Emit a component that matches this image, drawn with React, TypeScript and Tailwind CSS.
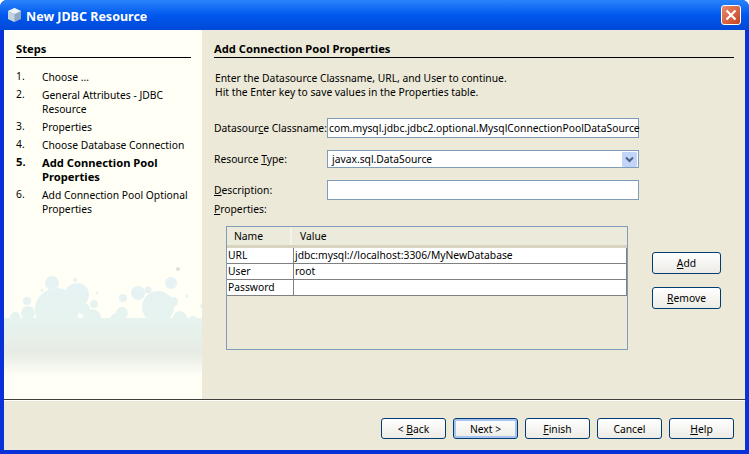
import type { ReactNode } from "react";

const FONT = "font-['Noto_Sans','DejaVu_Sans',sans-serif] text-[10.3px] leading-[14px]";
const BOLD = "text-[11.2px] font-bold";

const STEPS: { n: string; label: string; active?: boolean }[] = [
  { n: "1.", label: "Choose ..." },
  { n: "2.", label: "General Attributes - JDBC Resource" },
  { n: "3.", label: "Properties" },
  { n: "4.", label: "Choose Database Connection" },
  { n: "5.", label: "Add Connection Pool Properties", active: true },
  { n: "6.", label: "Add Connection Pool Optional Properties" },
];

const BUBBLES = [
  [52, 283, 7], [75, 280, 2], [42, 290, 1.5], [57, 310, 22], [77, 295, 12], [97, 293, 1.5],
  [94, 304, 4], [27, 301, 4], [123, 298, 4], [138, 293, 7], [148, 290, 3.5], [171, 283, 6],
  [158, 307, 16], [173, 302, 5], [187, 296, 1.5], [122, 313, 6], [92, 318, 9], [84, 309, 6],
  [28, 313, 7], [15, 317, 5], [117, 320, 7], [180, 318, 7], [193, 320, 4], [202, 306, 2],
];

function Bubbles() {
  return (
    <svg className="absolute left-0 top-[230px] h-[139px] w-[198px]" viewBox="0 260 198 139">
      <defs>
        <linearGradient id="fade" gradientUnits="userSpaceOnUse" x1="0" y1="275" x2="0" y2="376">
          <stop offset="0" stopColor="#e6f2f5" />
          <stop offset="0.45" stopColor="#e6f3ee" />
          <stop offset="0.78" stopColor="#e7ece5" />
          <stop offset="1" stopColor="#fffff6" />
        </linearGradient>
      </defs>
      <g fill="url(#fade)">
        {BUBBLES.map(([x, y, r]) => (
          <circle key={`${x}-${y}`} cx={x - 4} cy={y} r={r} />
        ))}
        <rect x="0" y="318" width="198" height="60" />
      </g>
      <circle cx="174" cy="269" r="2" fill="#e2e0dc" />
    </svg>
  );
}

function WinButton({ children, primary }: { children: ReactNode; primary?: boolean }) {
  return (
    <button
      className={`h-[21px] w-[65px] rounded-[3px] border border-[#003c74] bg-gradient-to-b from-white to-[#ecebe5] text-center text-black ${FONT} ${
        primary ? "shadow-[inset_0_0_0_2px_#a9c4f0]" : ""
      }`}
    >
      {children}
    </button>
  );
}

function SideButton({ children }: { children: ReactNode }) {
  return (
    <button className={`h-[22px] w-[69px] rounded-[3px] border border-[#003c74] bg-gradient-to-b from-white to-[#ecebe5] ${FONT}`}>
      {children}
    </button>
  );
}

function Field({ children, combo }: { children?: ReactNode; combo?: boolean }) {
  return (
    <div className={`flex w-[312px] items-center justify-between border border-[#7f9db9] bg-white pl-[1px] ${combo ? "h-[18px] pr-[1px]" : "h-[20px]"}`}>
      <span className="whitespace-nowrap">{children}</span>
      {combo && (
        <span className="flex h-[15px] w-[15px] items-center justify-center rounded-[1px] bg-[#c3d4fb]">
          <svg width="9" height="7" viewBox="0 0 9 7">
            <path d="M1 1.5 L4.5 5 L8 1.5" fill="none" stroke="#4d6185" strokeWidth="2" />
          </svg>
        </span>
      )}
    </div>
  );
}

function Row({ name, value }: { name: string; value?: string }) {
  return (
    <div className="flex h-[16px] border-b border-[#808080] bg-white leading-[15px]">
      <div className="w-[67px] border-r border-[#808080] pl-[1px]">{name}</div>
      <div className="flex-1 border-r border-[#808080] pl-[1px]">{value}</div>
    </div>
  );
}

export default function App() {
  return (
    <div className={`flex h-[454px] w-[749px] flex-col overflow-hidden rounded-t-[7px] bg-[#0831d9] text-black ${FONT}`}>
      <div className="flex h-[30px] shrink-0 items-center bg-gradient-to-b from-[#2a83fb] via-[#0058ee] to-[#0048d8] pl-[7px] pr-[8px]">
        <svg width="15" height="16" viewBox="0 0 15 16">
          <path d="M7.5 1 L14 4 V12 L7.5 15 L1 12 V4 Z" fill="#8fa9c4" />
          <path d="M7.5 1 L14 4 L7.5 7 L1 4 Z" fill="#eef3f8" />
          <path d="M1 4 L7.5 7 V15 L1 12 Z" fill="#c3d2e0" />
        </svg>
        <span className="ml-[4px] flex-1 pt-[3px] font-['Noto_Sans',sans-serif] text-[12.5px] font-bold text-white">New JDBC Resource</span>
        <span className="flex h-[20px] w-[20px] items-center justify-center rounded-[3px] border border-white bg-gradient-to-br from-[#e58a6c] to-[#c8401c]">
          <svg width="12" height="12" viewBox="0 0 12 12">
            <path d="M1.5 1.5 L10.5 10.5 M10.5 1.5 L1.5 10.5" stroke="white" strokeWidth="2.2" />
          </svg>
        </span>
      </div>

      <div className="mx-[4px] mb-[4px] flex min-h-0 flex-1 flex-col bg-[#ece9d8]">
        <div className="flex min-h-0 flex-1">
          <aside className="relative w-[198px] shrink-0 bg-[#fffff6] pl-[12px] pr-[11px] pt-[12px]">
            <Bubbles />
            <div className="relative">
              <h2 className={`border-b border-black pb-[1px] ${BOLD}`}>Steps</h2>
              <ol className="mt-[12px] flex flex-col gap-[4px]">
                {STEPS.map((s) => (
                  <li key={s.n} className={`flex ${s.active ? BOLD : ""}`}>
                    <span className="w-[26px] shrink-0 -translate-y-[1px]">{s.n}</span>
                    <span>{s.label}</span>
                  </li>
                ))}
              </ol>
            </div>
          </aside>

          <main className="min-w-0 flex-1 pl-[12px] pr-[11px] pt-[12px]">
            <h2 className={`border-b border-black pb-[1px] ${BOLD}`}>Add Connection Pool Properties</h2>
            <p className="ml-[1px] mt-[13px]">
              Enter the Datasource Classname, URL, and User to continue.
              <br />
              Hit the Enter key to save values in the Properties table.
            </p>

            <div className="mt-[19px] flex items-center">
              <label className="w-[113px] shrink-0 whitespace-nowrap">
                Datasour<u>c</u>e Classname:
              </label>
              <Field>com.mysql.jdbc.jdbc2.optional.MysqlConnectionPoolDataSource</Field>
            </div>
            <div className="mt-[12px] flex items-center">
              <label className="w-[113px] shrink-0">
                Resource <u>T</u>ype:
              </label>
              <Field combo>
                <span className="pl-[3px]">javax.sql.DataSource</span>
              </Field>
            </div>
            <div className="mt-[12px] flex items-center">
              <label className="w-[113px] shrink-0">
                <u>D</u>escription:
              </label>
              <Field />
            </div>
            <div className="mt-[2px]">
              <u>P</u>roperties:
            </div>

            <div className="flex">
              <div className="ml-[12px] mt-[10px] h-[124px] w-[402px] border border-[#7f9db9]">
                <div className="flex h-[21px] border-b-[3px] border-[#d8d4c0] bg-[#ebeadb] leading-[18px]">
                  <div className="w-[65px] border-r-2 border-[#f5f3e8] pl-[7px]">Name</div>
                  <div className="flex-1 pl-[8px]">Value</div>
                </div>
                <Row name="URL" value="jdbc:mysql://localhost:3306/MyNewDatabase" />
                <Row name="User" value="root" />
                <Row name="Password" />
              </div>
              <div className="ml-[24px] mt-[36px] flex flex-col gap-[13px]">
                <SideButton>
                  <u>A</u>dd
                </SideButton>
                <SideButton>
                  <u>R</u>emove
                </SideButton>
              </div>
            </div>
          </main>
        </div>

        <footer className="flex h-[51px] shrink-0 items-start justify-end gap-[7px] border-t border-t-[#3f3f3a] pr-[11px] pt-[18px] shadow-[inset_0_1px_0_#fff]">
          <WinButton>
            &lt; <u>B</u>ack
          </WinButton>
          <WinButton primary>Next &gt;</WinButton>
          <WinButton>
            <u>F</u>inish
          </WinButton>
          <WinButton>Cancel</WinButton>
          <WinButton>
            <u>H</u>elp
          </WinButton>
        </footer>
      </div>
    </div>
  );
}
